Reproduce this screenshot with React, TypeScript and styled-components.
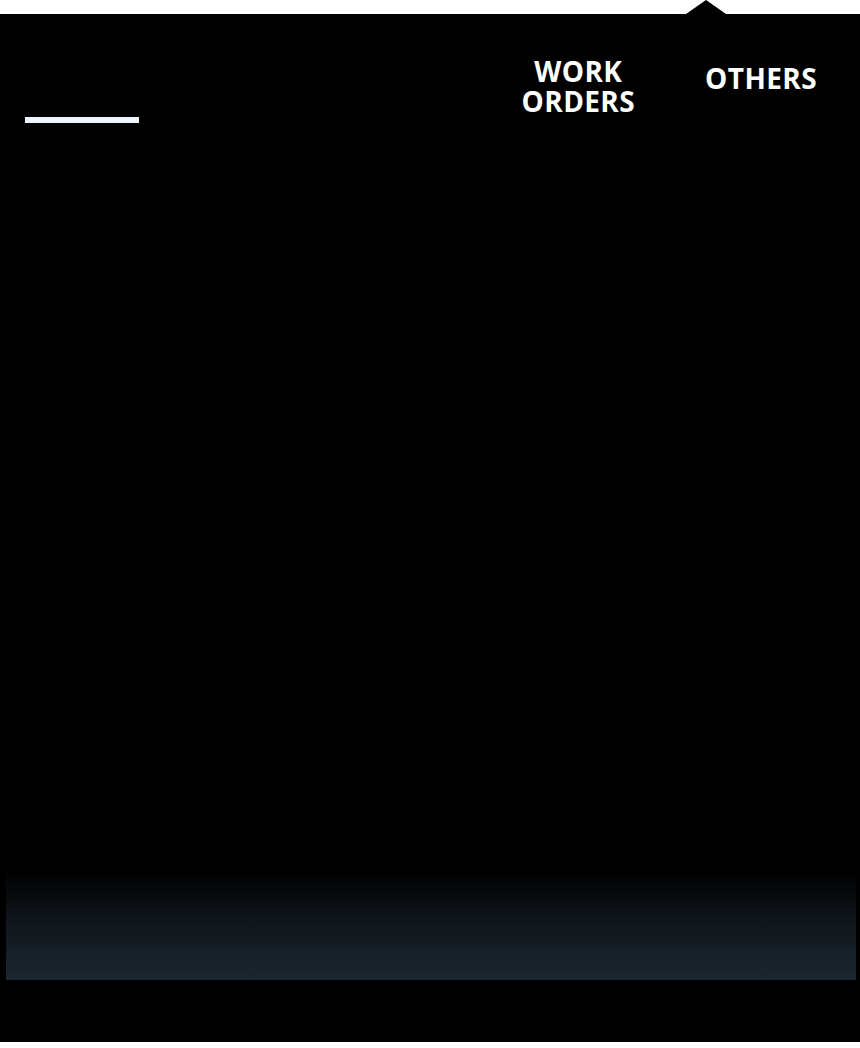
import * as React from 'react';
import styled, { createGlobalStyle } from 'styled-components';

const GlobalStyle = createGlobalStyle`
  html, body {
    margin: 0;
    padding: 0;
    background: #ffffff;
  }
  body {
    font-family: "Open Sans", "Noto Sans", sans-serif;
  }
`;

const Page = styled.div`
  padding: 14px 0 6px;
  background: #ffffff;
`;

const Frame = styled.div`
  position: relative;
  height: 1028px;
  display: flex;
  flex-direction: column;
  background: #000000;
  color: #ffffff;
`;

const Notch = styled.div<{ $left: number }>`
  position: absolute;
  top: -14px;
  left: ${(p) => p.$left}px;
  width: 0;
  height: 0;
  border-left: 20px solid transparent;
  border-right: 20px solid transparent;
  border-bottom: 14px solid #000000;
`;

const Header = styled.header`
  display: flex;
  align-items: flex-start;
`;

const LogoBar = styled.div`
  margin: 103px 0 0 25px;
  width: 114px;
  height: 6px;
  background: #eef6fc;
`;

const Nav = styled.nav`
  margin-left: auto;
  display: flex;
  align-items: flex-start;
  gap: 70px;
  padding-right: 43px;
`;

const NavItem = styled.a<{ $top: number }>`
  display: flex;
  flex-direction: column;
  align-items: center;
  margin-top: ${(p) => p.$top}px;
  font-size: 28px;
  font-weight: 700;
  letter-spacing: 0.4px;
  line-height: 30px;
  color: #ffffff;
  text-decoration: none;
  cursor: pointer;
`;

const Spacer = styled.div`
  flex: 1;
`;

const Footer = styled.footer`
  margin: 0 4px 62px 6px;
  height: 110px;
  background: linear-gradient(to bottom, #000000 0%, #0f151b 45%, #1c2730 100%);
`;

export default function App() {
  return (
    <>
      <GlobalStyle />
      <Page>
        <Frame>
          <Notch $left={686} />
          <Header>
            <LogoBar />
            <Nav>
              <NavItem $top={42}>
                <span>WORK</span>
                <span>ORDERS</span>
              </NavItem>
              <NavItem $top={49}>OTHERS</NavItem>
            </Nav>
          </Header>
          <Spacer />
          <Footer />
        </Frame>
      </Page>
    </>
  );
}
